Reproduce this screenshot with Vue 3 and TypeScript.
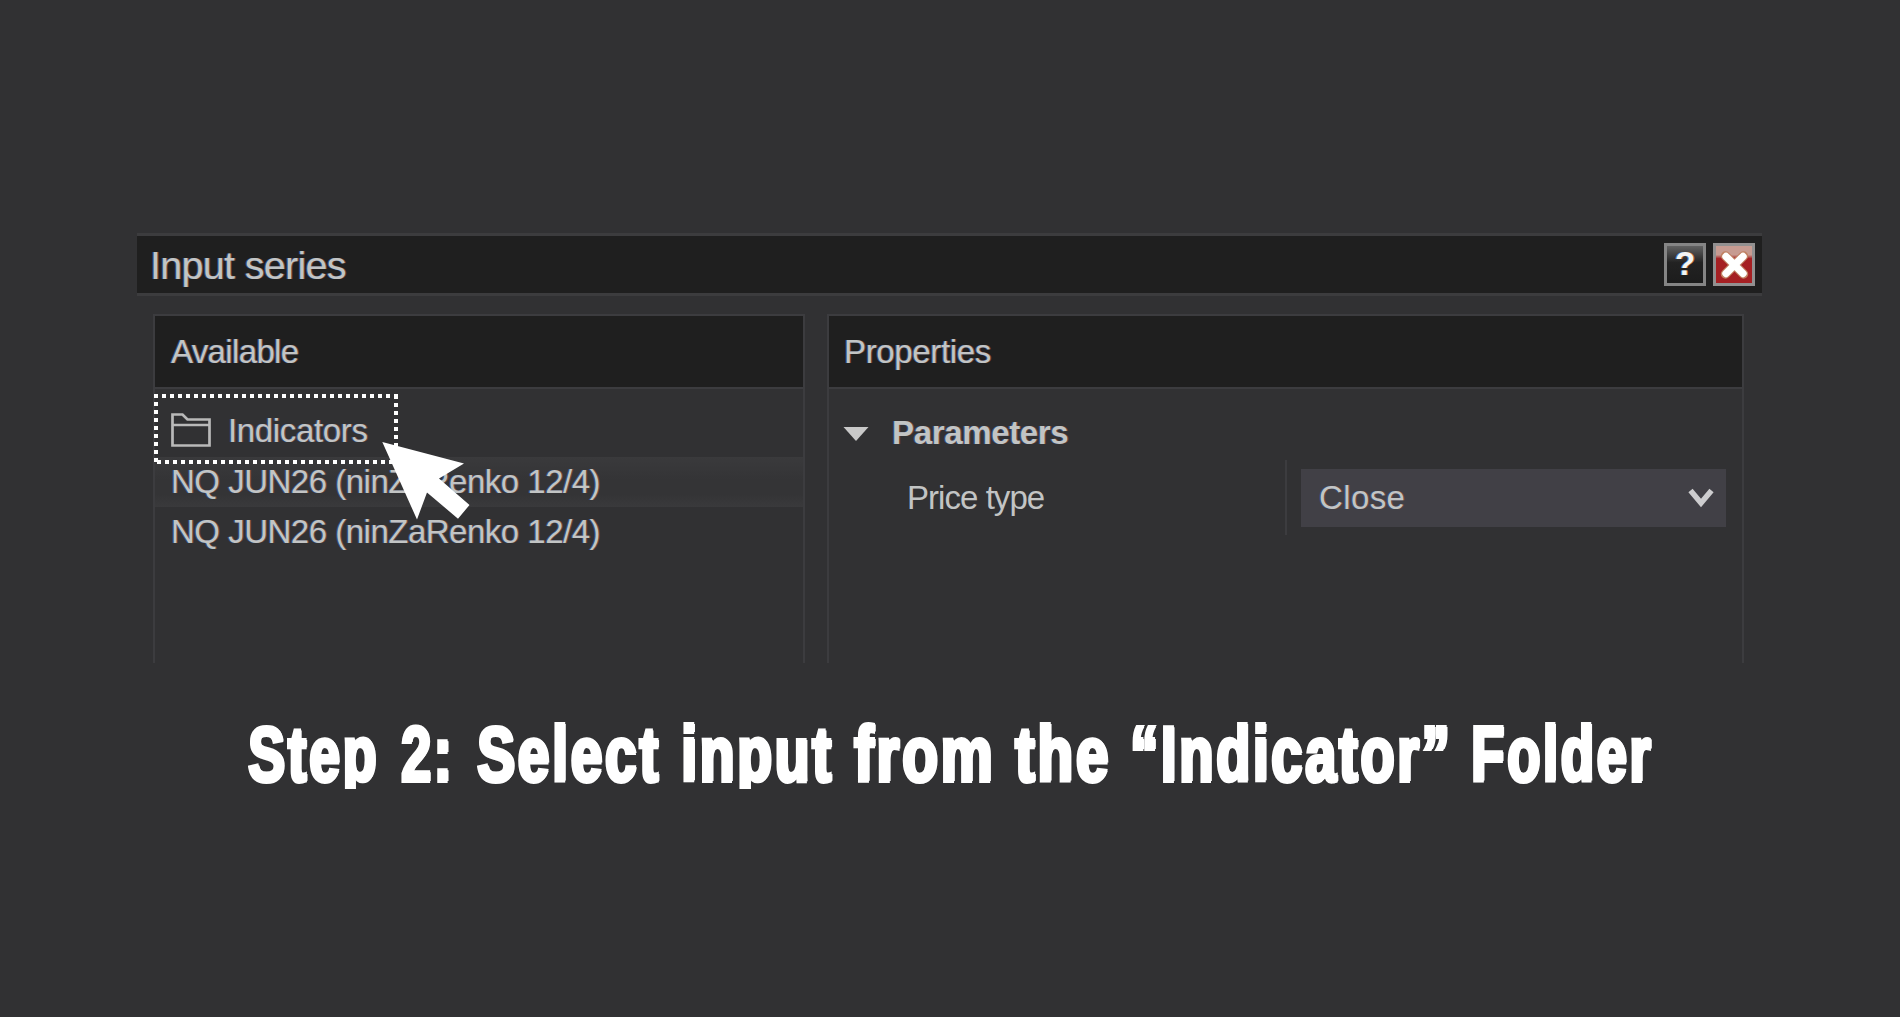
<script setup lang="ts">
import { onMounted, ref } from 'vue'

interface Word { text: string; gap: number; width: number }

const seriesRows: string[] = ['NQ JUN26 (ninZaRenko 12/4)', 'NQ JUN26 (ninZaRenko 12/4)']

const caption: Word[] = [
  { text: 'Step', gap: 0, width: 131 },
  { text: '2:', gap: 22, width: 53 },
  { text: 'Select', gap: 23, width: 184 },
  { text: 'input', gap: 20, width: 153 },
  { text: 'from', gap: 20, width: 141 },
  { text: 'the', gap: 20, width: 96 },
  { text: '“Indicator”', gap: 19, width: 322 },
  { text: 'Folder', gap: 19, width: 182 },
]

// Each caption word is condensed to its own column width.
const scales = ref<number[]>(caption.map(() => 0.75))
const wordEls = ref<HTMLElement[]>([])

onMounted(() => {
  scales.value = wordEls.value.map((el, i) => caption[i].width / el.offsetWidth)
})
</script>

<template>
  <main class="stage">
    <section class="dialog">
      <header class="titlebar">
        <h1>Input series</h1>
        <div class="actions">
          <button class="btn help" aria-label="Help"><span>?</span></button>
          <button class="btn close" aria-label="Close">
            <svg width="37" height="37" viewBox="0 0 37 37">
              <path d="M9.500 10L27.500 28M27.500 10L9.500 28" stroke="#c08062" stroke-width="9.500" stroke-linecap="round" />
              <path d="M10 10.500L27 27.500M27 10.500L10 27.500" stroke="#fff" stroke-width="7.400" stroke-linecap="round" />
            </svg>
          </button>
        </div>
      </header>

      <div class="panels">
        <section class="panel available">
          <h2>Available</h2>
          <div class="folder">
            <svg width="40" height="36" viewBox="0 0 40 36" fill="none" stroke="#b9b9b9" stroke-width="2.700">
              <path d="M1.500 33.500V2.500H11.500L16.500 7.500H38.500V33.500ZM1.500 13H38.500" />
            </svg>
            <span>Indicators</span>
          </div>
          <div v-for="(row, i) in seriesRows" :key="i" class="row" :class="{ active: i === 0 }">{{ row }}</div>
          <svg class="marker" width="244" height="70" viewBox="0 0 244 70" stroke="#fff" stroke-width="4" stroke-dasharray="4 4">
            <path d="M0 2H244M2 0V70M242 1V70M3 68H244" />
          </svg>
          <svg class="pointer" width="90" height="80" viewBox="0 0 90 80">
            <path d="M.3 0L82 21.500L57 36.500L87.500 63L76 76.700L45 50.500L35 77.500Z" fill="#fff" />
          </svg>
        </section>

        <section class="panel properties">
          <h2>Properties</h2>
          <div class="group">
            <svg width="26" height="16" viewBox="0 0 26 16"><path d="M.5 1H25.500L13 15Z" fill="#c9c9c9" /></svg>
            <strong>Parameters</strong>
          </div>
          <div class="field">
            <label>Price type</label>
            <div class="cell">
              <div class="select">
                <span>Close</span>
                <svg width="26" height="20" viewBox="0 0 26 20" fill="none" stroke="#cdcdcf" stroke-width="5.500">
                  <path d="M2.500 2.500L13 15L23.500 2.500" />
                </svg>
              </div>
            </div>
          </div>
        </section>
      </div>
    </section>

    <p class="caption">
      <span v-for="(word, i) in caption" :key="word.text" class="word" :style="{ width: word.width + 'px', marginLeft: word.gap + 'px' }">
        <span ref="wordEls" class="glyphs" :style="{ transform: `scaleX(${scales[i]})` }">{{ word.text }}</span>
      </span>
    </p>
  </main>
</template>

<style>
body { margin: 0; background: #313133; }
</style>

<style scoped>
.stage {
  box-sizing: border-box;
  width: 1900px;
  height: 1017px;
  padding-top: 233px;
  overflow: hidden;
  background: #313133;
  color: #c2c4c4;
  font: 33px "Liberation Sans", Arial, sans-serif;
  letter-spacing: -.5px;
}
h1, h2 { margin: 0; font-weight: 400; }
h1, h2, .row, .folder span, strong, .select span {
  text-shadow: -1px 0 #345181, 1px 0 #73483a;
}
.dialog { width: 1625px; height: 430px; margin-left: 137px; }
.titlebar {
  box-sizing: border-box;
  display: flex;
  justify-content: space-between;
  align-items: center;
  height: 63px;
  padding: 0 7px 0 13px;
  border: solid #3c3c3e;
  border-width: 3px 0;
  background: #1f1f1f;
}
h1 { font-size: 39.5px; line-height: 56px; letter-spacing: -.7px; }
.actions { display: flex; gap: 7px; }
.btn {
  box-sizing: border-box;
  display: grid;
  place-items: center;
  width: 42px;
  height: 43px;
  padding: 0;
  border: 3px solid #858585;
}
.help { background: linear-gradient(#626262, #222 45%, #1c1c1c); }
.help span {
  color: #f4f4f4;
  font: bold 33px/34px "Liberation Sans", sans-serif;
  padding-bottom: 2px;
  text-shadow: -1px 0 #4c86c5, 1px 0 #b56d3b;
}
.close { border-color: #929090; background: linear-gradient(#c79b91 0 24%, #a52023 34%); }
.btn svg { display: block; }
.panels { display: flex; gap: 22px; margin: 18px 0 0 16px; }
.panel {
  position: relative;
  box-sizing: border-box;
  height: 349px;
  border: 2px solid #3c3c3f;
  border-bottom: 0;
}
.available { width: 652px; }
.properties { width: 917px; }
h2 {
  height: 71px;
  padding-left: 16px;
  border-bottom: 2px solid #3c3c3f;
  background: #1f1f1f;
  font-size: 33px;
  line-height: 72px;
  letter-spacing: -.65px;
}
.properties h2 { padding-left: 15px; letter-spacing: -.35px; }
.folder {
  display: flex;
  align-items: center;
  gap: 17px;
  height: 68px;
  padding-left: 16px;
  line-height: 36px;
}
.folder span { padding-top: 15px; letter-spacing: -.35px; }
.folder svg { margin-top: 14px; }
.row { height: 50px; padding-left: 16px; line-height: 50px; white-space: pre; }
.active { background: linear-gradient(#3a3a3c, #343436 45%, #343436 75%, #3a3a3c); }
.marker { position: absolute; left: -1px; top: 78px; fill: none; }
.pointer { position: absolute; left: 227px; top: 126px; }
.group { display: flex; align-items: center; height: 71px; padding: 9px 0 0 14px; box-sizing: border-box; }
.group svg { margin-top: 9px; }
.group strong { margin-left: 23px; padding-top: 8px; letter-spacing: -.35px; }
.field { display: flex; height: 75px; }
.field label { width: 378px; padding-left: 78px; line-height: 76px; letter-spacing: -.95px; }
.cell { box-sizing: border-box; padding: 9px 0 0 14px; border-left: 2px solid #3c3c3f; }
.select {
  box-sizing: border-box;
  display: flex;
  align-items: center;
  justify-content: space-between;
  width: 425px;
  height: 58px;
  padding: 0 12px 0 18px;
  background: #414046;
}
.select span { letter-spacing: .4px; }
.caption {
  display: flex;
  margin: 37px 0 0 248px;
  height: 89px;
  clip-path: inset(0 0 0 -10px);
  color: #fff;
  font: bold 78px/108px "Liberation Sans", Arial, sans-serif;
  letter-spacing: 4px;
}
.word { display: block; flex: none; }
.glyphs {
  display: inline-block;
  transform-origin: 0 50%;
  white-space: pre;
  -webkit-text-stroke: 4px #fff;
  text-shadow: -1px 0 #fff, 1.5px 0 #fff, 3px 0 #fff;
}
</style>
